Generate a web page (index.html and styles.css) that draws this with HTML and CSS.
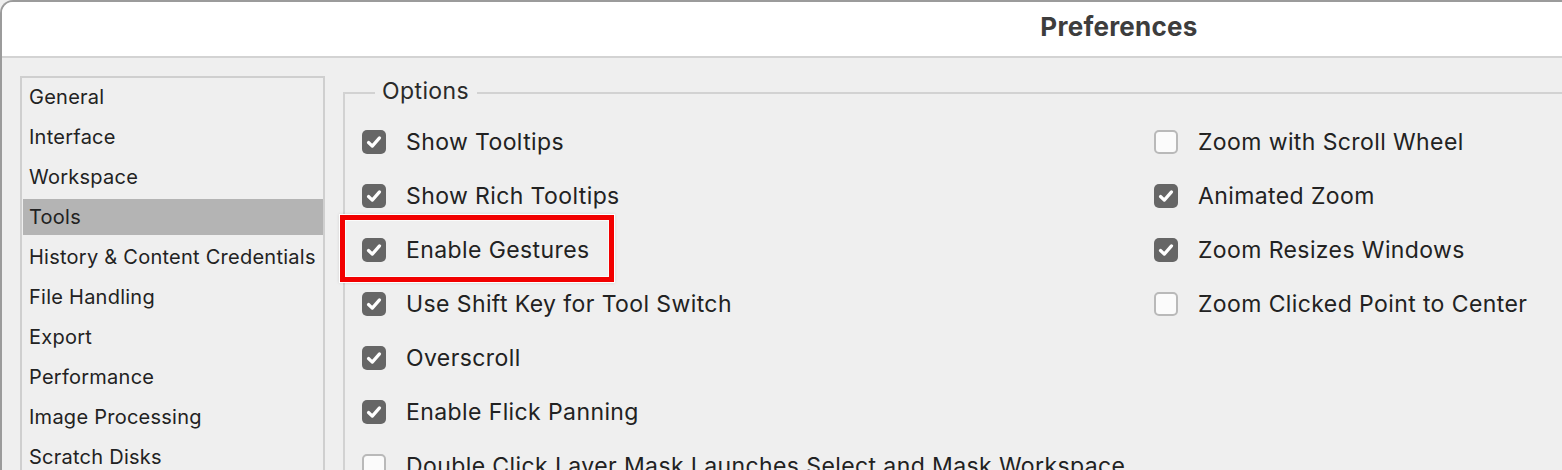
FILE: index.html
```html
<!DOCTYPE html>
<html>
<head>
<meta charset="utf-8">
<title>Preferences</title>
<link rel="stylesheet" href="styles.css">
</head>
<body>
<div class="window">
  <div class="titlebar"><span class="title">Preferences</span></div>
  <div class="content">
    <ul class="sidebar">
      <li class="nav-item">General</li>
      <li class="nav-item">Interface</li>
      <li class="nav-item">Workspace</li>
      <li class="nav-item selected">Tools</li>
      <li class="nav-item">History &amp; Content Credentials</li>
      <li class="nav-item">File Handling</li>
      <li class="nav-item">Export</li>
      <li class="nav-item">Performance</li>
      <li class="nav-item">Image Processing</li>
      <li class="nav-item">Scratch Disks</li>
    </ul>
    <fieldset class="group">
      <legend class="legend">Options</legend>
      <div class="columns">
        <div class="col">
          <div class="row"><span class="cb on"><svg viewBox="0 0 24 24"><path d="M6.5 12.5l3.8 3.6 7.2-8.2"/></svg></span><span class="label">Show Tooltips</span></div>
          <div class="row"><span class="cb on"><svg viewBox="0 0 24 24"><path d="M6.5 12.5l3.8 3.6 7.2-8.2"/></svg></span><span class="label">Show Rich Tooltips</span></div>
          <div class="row highlighted"><span class="cb on"><svg viewBox="0 0 24 24"><path d="M6.5 12.5l3.8 3.6 7.2-8.2"/></svg></span><span class="label">Enable Gestures</span><span class="callout"></span></div>
          <div class="row"><span class="cb on"><svg viewBox="0 0 24 24"><path d="M6.5 12.5l3.8 3.6 7.2-8.2"/></svg></span><span class="label">Use Shift Key for Tool Switch</span></div>
          <div class="row"><span class="cb on"><svg viewBox="0 0 24 24"><path d="M6.5 12.5l3.8 3.6 7.2-8.2"/></svg></span><span class="label">Overscroll</span></div>
          <div class="row"><span class="cb on"><svg viewBox="0 0 24 24"><path d="M6.5 12.5l3.8 3.6 7.2-8.2"/></svg></span><span class="label">Enable Flick Panning</span></div>
          <div class="row wide"><span class="cb"></span><span class="label">Double Click Layer Mask Launches Select and Mask Workspace</span></div>
        </div>
        <div class="col">
          <div class="row"><span class="cb"></span><span class="label">Zoom with Scroll Wheel</span></div>
          <div class="row"><span class="cb on"><svg viewBox="0 0 24 24"><path d="M6.5 12.5l3.8 3.6 7.2-8.2"/></svg></span><span class="label">Animated Zoom</span></div>
          <div class="row"><span class="cb on"><svg viewBox="0 0 24 24"><path d="M6.5 12.5l3.8 3.6 7.2-8.2"/></svg></span><span class="label">Zoom Resizes Windows</span></div>
          <div class="row"><span class="cb"></span><span class="label">Zoom Clicked Point to Center</span></div>
        </div>
      </div>
    </fieldset>
  </div>
</div>
</body>
</html>
```

FILE: styles.css
```css
html, body {
  margin: 0;
  padding: 0;
  overflow: hidden;
  background: #efefef;
}
body {
  width: 1562px;
  height: 470px;
  font-family: Inter, "Noto Sans", sans-serif;
  color: #222;
}
.window {
  width: 2236px;
  height: 520px;
  box-sizing: border-box;
  border-top: 2px solid #9b9b9b;
  border-left: 2px solid #9b9b9b;
  border-top-left-radius: 13px;
  background: #efefef;
  overflow: hidden;
}
.titlebar {
  height: 50px;
  padding-bottom: 4px;
  background: #fff;
  border-bottom: 2px solid #d3d3d3;
  display: flex;
  align-items: center;
  justify-content: center;
  box-sizing: content-box;
}
.title {
  font-size: 26px;
  font-weight: 700;
  color: #3d3d3d;
  letter-spacing: 0.25px;
  line-height: 30px;
}
.content {
  display: flex;
  align-items: flex-start;
  padding: 18px 0 0 18px;
  gap: 18px;
}
.sidebar {
  list-style: none;
  margin: 0;
  padding: 0 0 0 1px;
  width: 300px;
  height: 420px;
  border: 2px solid #cfcfcf;
  background: #efefef;
  display: flex;
  flex-direction: column;
}
.nav-item {
  height: 36px;
  margin: 1px 0 3px;
  flex: none;
  display: flex;
  align-items: center;
  padding-left: 6px;
  font-size: 20px;
  letter-spacing: 0.25px;
  color: #222;
  white-space: nowrap;
}
.nav-item.selected {
  background: #b4b4b4;
}
.group {
  margin: 2px 0 0 0;
  padding: 7px 0 0 17px;
  border: 2px solid #d2d2d2;
  border-right: none;
  min-width: 0;
  flex: 1;
  height: 420px;
}
.legend {
  margin-left: 13px;
  padding: 0 8px 4px 7px;
  font-size: 23px;
  letter-spacing: 0.4px;
  color: #2a2a2a;
  line-height: 26px;
}
.columns {
  display: grid;
  grid-template-columns: 792px auto;
}
.row {
  position: relative;
  height: 54px;
  display: flex;
  align-items: center;
  gap: 20px;
  white-space: nowrap;
}
.label {
  font-size: 23px;
  letter-spacing: 0.4px;
  color: #222;
}
.cb {
  width: 24px;
  height: 24px;
  box-sizing: border-box;
  border-radius: 5px;
  border: 2px solid #b9b9b9;
  background: #fbfbfb;
  flex: none;
  display: flex;
  align-items: center;
  justify-content: center;
}
.cb.on {
  border: none;
  background: #666;
}
.cb svg {
  width: 24px;
  height: 24px;
}
.cb svg path {
  fill: none;
  stroke: #fff;
  stroke-width: 3.2;
  stroke-linecap: round;
  stroke-linejoin: round;
}
.callout {
  position: absolute;
  left: -22px;
  top: -8px;
  width: 274px;
  height: 67px;
  box-sizing: border-box;
  border: 5px solid #f20000;
  box-shadow: 0 0 0 1px #fff, inset 0 0 0 1px #fbfbfb, 0 0 3px 1px rgba(0,0,0,0.12);
  pointer-events: none;
}
```
